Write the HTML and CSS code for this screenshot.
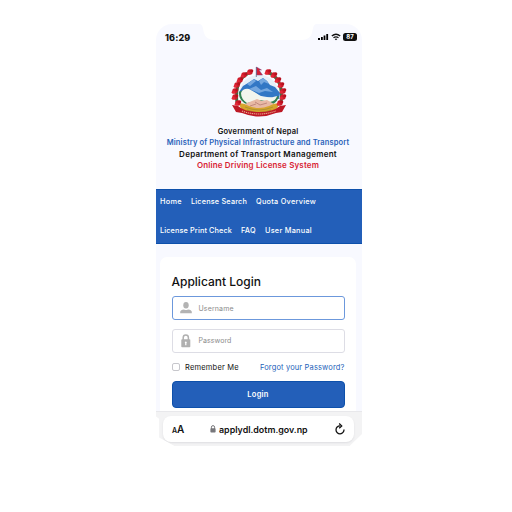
FILE: index.html
```html
<!DOCTYPE html>
<html lang="en">
<head>
<meta charset="utf-8">
<title>Online Driving License System</title>
<link rel="stylesheet" href="styles.css">
</head>
<body>
<main class="phone">
  <div class="status">
    <svg class="notch" width="116" height="17" viewBox="0 0 116 17"><path d="M0 0C3 1 3 5 4 9Q6 16 14 16H102Q110 16 112 9C113 5 113 1 116 0Z" fill="#fff"/></svg>
    <span class="time">16:29</span>
    <span class="signals">
      <svg width="11" height="8" viewBox="0 0 11 8"><path d="M0 5h2v2H0zM3 4h1.800v3H3zM5.600 2.500h1.800V7H5.600zM8.300 1h1.800v6H8.300z"/></svg>
      <svg width="10" height="8" viewBox="0 0 10 8" fill="none" stroke="#111" stroke-width="1.400"><path d="M.8 3Q5-.5 9.200 3M2.500 4.800Q5 2.900 7.500 4.800"/><path d="M3.600 5.900Q5 4.900 6.400 5.900L5 7.300Z" fill="#111" stroke="none"/></svg>
      <b class="battery">87</b>
    </span>
  </div>
  <header class="head">
    <svg class="emblem" width="56" height="54" viewBox="0 0 56 54">
      <defs><g id="flower"><circle r="2.700" fill="#cf1b2a"/><circle cx="-1.700" cy="1.200" r="1.600" fill="#e32838"/><circle cx="1.800" cy="-1.200" r="1.500" fill="#b8101f"/></g></defs>
      <path d="M20 7Q3 13 6 38M36 7Q53 13 50 38" fill="none" stroke="#397345" stroke-width="3"/>
      <ellipse cx="28" cy="27" rx="19" ry="17" fill="#e6eff8"/>
      <path d="M8 27L12 21L17 18L23 14L27 16L32 13L36 16L39 20L44 22L49 28L48 34L30 31L20 26Z" fill="#3277c5"/>
      <path d="M16 19L23 14L25 16L19 21ZM28 16L32 13L36 16L38 19L33 17L30 20ZM18 24L25 21L30 25L36 23L42 27L34 26L28 28Z" fill="#75a7df"/>
      <path d="M8 27Q12 24 16 27Q23 33 38 34L48 31Q47 36 42 39L31 36L17 40Q7 36 8 27Z" fill="#338252"/>
      <path d="M10 28Q12 23 18 24Q24 27 29 31Q36 34 46 31Q45 36 39 37L29 35L16 38Q10 34 10 28Z" fill="#f3f5ed"/>
      <path d="M14 39L21 36L26 34L31 36L36 35L43 39L37 43L29 44L19 43Z" fill="#e8b9a5"/>
      <path d="M24 37L29 40L36 38M19 41L25 39" fill="none" stroke="#b77c72" stroke-width=".8"/>
      <path d="M8 38Q13 38 18 41Q28 45 38 41Q43 38 48 38Q47 44 42 47Q28 52 14 47Q9 44 8 38Z" fill="#d6a52d"/>
      <path d="M14 42Q28 48 42 42M16 45Q28 50 40 45" fill="none" stroke="#9a8d31" stroke-width=".7"/>
      <path d="M1 40L7 41Q14 47 28 47Q42 47 49 41L55 40L51 47L45 48Q28 55 11 48L5 47Z" fill="#bd1925"/>
      <path d="M11 46Q28 52 45 46" fill="none" stroke="#edb092" stroke-width="1.100" stroke-dasharray="1.200 .8"/>
      <path d="M25.500 2L30.500 5H28L31.500 10H25.500Z" fill="#d32038" stroke="#7b4b84" stroke-width=".5"/>
      <path d="M25.300 2V12" stroke="#52557b" stroke-width=".7"/>
      <use href="#flower" x="19" y="7"/><use href="#flower" x="13" y="10"/><use href="#flower" x="9" y="15"/><use href="#flower" x="6" y="20"/><use href="#flower" x="4" y="26"/><use href="#flower" x="4" y="32"/><use href="#flower" x="7" y="38"/>
      <use href="#flower" x="37" y="7"/><use href="#flower" x="43" y="10"/><use href="#flower" x="47" y="15"/><use href="#flower" x="50" y="20"/><use href="#flower" x="52" y="26"/><use href="#flower" x="52" y="32"/><use href="#flower" x="49" y="38"/>
    </svg>
    <p class="gov">Government of Nepal</p>
    <p class="ministry">Ministry of Physical Infrastructure and Transport</p>
    <p class="dept">Department of Transport Management</p>
    <p class="system">Online Driving License System</p>
  </header>
  <nav class="nav">
    <div class="row"><a class="home">Home</a><a class="search">License Search</a><a class="quota">Quota Overview</a></div>
    <div class="row"><a class="print">License Print Check</a><a class="faq">FAQ</a><a class="manual">User Manual</a></div>
  </nav>
  <section class="card">
    <h1>Applicant Login</h1>
    <div class="field active">
      <svg width="14" height="14" viewBox="0 0 14 14" fill="#b3b3b3"><ellipse cx="7" cy="4.200" rx="2.700" ry="3.300"/><path d="M1.200 12.300V10.800Q1.500 9 5 8.500Q7 9.500 9 8.500Q12.500 9 12.800 10.800V12.300Z"/></svg>
      <span class="user">Username</span>
    </div>
    <div class="field">
      <svg width="14" height="14" viewBox="0 0 14 14"><path d="M4.200 6V3.700a2.600 2.600 0 0 1 5.200 0V6" fill="none" stroke="#b0b0b0" stroke-width="1.500"/><rect x="2.300" y="5.300" width="9" height="8" rx=".8" fill="#b0b0b0"/><path d="M6.800 7.500a1 1 0 0 1 .6 1.800v1.900H6.200V9.300a1 1 0 0 1 .6-1.800" fill="#fff"/></svg>
      <span class="pass">Password</span>
    </div>
    <div class="options"><i class="check"></i><span class="remember">Remember Me</span><a class="forgot">Forgot your Password?</a></div>
    <div class="button">Login</div>
  </section>
  <footer class="browser">
    <div class="address">
      <span class="aa"><small>A</small>A</span>
      <svg class="lock" width="6" height="8" viewBox="0 0 6 8"><path d="M1.400 4V2.200a1.600 1.600 0 0 1 3.200 0V4" fill="none" stroke="#77777b"/><rect x=".4" y="3.300" width="5.200" height="4.300" rx=".8" fill="#77777b"/></svg>
      <span class="url">applydl.dotm.gov.np</span>
      <svg class="reload" width="12" height="13" viewBox="0 0 12 13" fill="none" stroke="#111" stroke-width="1.300"><path d="M6 2.800A4 4 0 1 0 10 6.500M5.200 .6L7.700 2.900L5.200 5.300"/></svg>
    </div>
  </footer>
</main>
</body>
</html>
```

FILE: styles.css
```css
* { box-sizing: border-box; }
body { margin: 0; background: #fff; font-family: Inter, "Liberation Sans", sans-serif; color: #111; }
.phone { width: 206px; height: 422px; margin: 24px 0 0 156px; background: linear-gradient(#f8f9ff 387px, #fff 387px); border-radius: 16px 16px 0 0; overflow: hidden; display: flex; flex-direction: column; }
.status { position: relative; height: 41px; flex: none; display: flex; justify-content: space-between; padding: 8px 5px 0 9px; }
.notch { position: absolute; left: 44px; top: 0; }
.time { font-size: 9px; line-height: 11px; font-weight: 800; letter-spacing: .1px; }
.signals { display: flex; gap: 2px; height: 10px; align-items: center; }
.battery { width: 14px; height: 8px; border-radius: 2.5px; background: #111; color: #fff; font-size: 6px; line-height: 8px; text-align: center; }
.head { height: 124px; flex: none; display: flex; flex-direction: column; align-items: center; padding-right: 2px; font-weight: 600; white-space: nowrap; }
.head p { margin: 0; height: 11.4px; line-height: 11.4px; font-size: 8px; }
.emblem { display: block; margin: 0 0 7px 1px; flex: none; }
.head .gov { font-size: 7.5px; letter-spacing: .18px; }
.head .ministry { font-size: 7.5px; letter-spacing: .13px; color: #2862b9; }
.head .dept { letter-spacing: .27px; }
.head .system { letter-spacing: .15px; color: #d91f35; }
.nav { height: 55px; flex: none; background: #235fb9; border-top: 1px solid #0d50ab; border-bottom: 1px solid #0d50ab; padding: 6px 4px 0; color: #fff; font-size: 7.3px; font-weight: 500; }
.row { display: flex; gap: 9px; height: 29px; line-height: 12px; white-space: nowrap; }
.home { width: 22px; letter-spacing: .3px; }
.search { width: 56px; letter-spacing: .18px; }
.quota { width: 60px; letter-spacing: .28px; }
.print { width: 72px; letter-spacing: .13px; }
.faq { width: 15px; letter-spacing: .2px; }
.manual { width: 47px; letter-spacing: .27px; }
.card { margin: 13px 6px 0 4px; height: 154px; flex: none; background: #fff; border-radius: 7px 7px 0 0; padding: 16px 11px 0 11.5px; }
h1 { margin: 0 0 6px; font-size: 12px; line-height: 17px; font-weight: 500; white-space: nowrap; }
.field { width: 173px; height: 24px; margin-bottom: 8.5px; border: 1px solid #dddde5; border-radius: 3px; display: flex; align-items: center; padding-left: 6px; gap: 6px; color: #8b8b8b; font-size: 7px; }
.user { letter-spacing: .15px; }
.pass { letter-spacing: .07px; }
.active { border-color: #6c98dc; }
.options { width: 173px; height: 12px; display: flex; align-items: center; font-size: 7.5px; white-space: nowrap; }
.check { width: 8px; height: 8px; border: 1px solid #c7c7cc; border-radius: 2px; margin-right: 5.5px; }
.remember { letter-spacing: .2px; }
.forgot { margin-left: auto; letter-spacing: .15px; color: #235fb9; }
.button { width: 173px; height: 27px; margin-top: 8px; border: 1px solid #0d50ab; border-radius: 4px; background: #235fb9; color: #fff; font-size: 7.5px; letter-spacing: .25px; line-height: 25px; font-weight: 600; text-align: center; }
.browser { height: 35px; background: #f3f3f4; border-top: 1px solid #e8e8eb; padding: 4px 8px 0 7px; clip-path: polygon(0 0,100% 0,100% 23px,94% 100%,9% 100%,1.5% 76%,1.5% 22%,0 16%); }
.address { height: 26px; background: #fff; border-radius: 8px; display: flex; align-items: center; padding: 0 8px 0 9px; box-shadow: 0 1px 2px #dedee1; }
.aa { width: 38px; font-size: 10px; font-weight: 600; letter-spacing: -.1px; }
.aa small { font-size: 7px; }
.lock { margin-right: 3px; }
.url { font-size: 8.9px; font-weight: 600; }
.reload { margin-left: auto; }
```
